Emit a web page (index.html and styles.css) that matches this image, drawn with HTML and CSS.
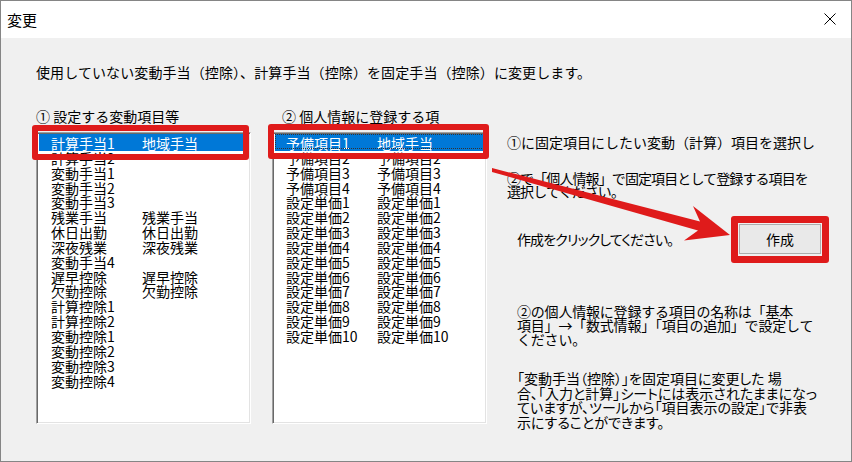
FILE: index.html
```html
<!DOCTYPE html>
<html>
<head lang="ja">
    <meta charset="UTF-8">
    <title>変更</title>
    <link rel="stylesheet" href="styles.css">
</head>
<body>
    <div class="window">
        <div class="titlebar">
            <span class="title">変更</span>
            <svg class="close" width="12" height="12" viewBox="0 0 12 12">
                <path d="M0.5 0.5 L11.5 11.5 M11.5 0.5 L0.5 11.5" stroke="#000" stroke-width="1" fill="none"/>
            </svg>
        </div>

        <div class="client">
            <p class="lead">使用していない変動手当（控除）、計算手当（控除）を固定手当（控除）に変更します。</p>

            <div class="main">
                <div class="pane">
                    <div class="pane-label">① 設定する変動項目等</div>
                    <ul class="listbox">
                        <li class="selected"><span>計算手当1</span><span>地域手当</span></li>
                        <li><span>計算手当2</span><span></span></li>
                        <li><span>変動手当1</span><span></span></li>
                        <li><span>変動手当2</span><span></span></li>
                        <li><span>変動手当3</span><span></span></li>
                        <li><span>残業手当</span><span>残業手当</span></li>
                        <li><span>休日出勤</span><span>休日出勤</span></li>
                        <li><span>深夜残業</span><span>深夜残業</span></li>
                        <li><span>変動手当4</span><span></span></li>
                        <li><span>遅早控除</span><span>遅早控除</span></li>
                        <li><span>欠勤控除</span><span>欠勤控除</span></li>
                        <li><span>計算控除1</span><span></span></li>
                        <li><span>計算控除2</span><span></span></li>
                        <li><span>変動控除1</span><span></span></li>
                        <li><span>変動控除2</span><span></span></li>
                        <li><span>変動控除3</span><span></span></li>
                        <li><span>変動控除4</span><span></span></li>
                    </ul>
                </div>

                <div class="pane pane-second">
                    <div class="pane-label">② 個人情報に登録する項</div>
                    <ul class="listbox">
                        <li class="selected focused"><span>予備項目1</span><span>地域手当</span></li>
                        <li><span>予備項目2</span><span>予備項目2</span></li>
                        <li><span>予備項目3</span><span>予備項目3</span></li>
                        <li><span>予備項目4</span><span>予備項目4</span></li>
                        <li><span>設定単価1</span><span>設定単価1</span></li>
                        <li><span>設定単価2</span><span>設定単価2</span></li>
                        <li><span>設定単価3</span><span>設定単価3</span></li>
                        <li><span>設定単価4</span><span>設定単価4</span></li>
                        <li><span>設定単価5</span><span>設定単価5</span></li>
                        <li><span>設定単価6</span><span>設定単価6</span></li>
                        <li><span>設定単価7</span><span>設定単価7</span></li>
                        <li><span>設定単価8</span><span>設定単価8</span></li>
                        <li><span>設定単価9</span><span>設定単価9</span></li>
                        <li><span>設定単価10</span><span>設定単価10</span></li>
                    </ul>
                </div>

                <div class="guide">
                    <p class="step-one">①に固定項目にしたい変動（計算）項目を選択し</p>
                    <p class="step-two">②で「個人情報」で固定項目として登録する項目を<br>選択してください。</p>
                    <div class="action">
                        <span class="action-text">作成をクリックしてください。</span>
                        <button class="create-btn">作成</button>
                    </div>
                    <p class="note-name">②の個人情報に登録する項目の名称は「基本<br>項目」→「数式情報」「項目の追加」で設定して<br>ください。</p>
                    <p class="note-hide">「変動手当（控除）」を固定項目に変更した 場<br>合、「入力と計算」シートには表示されたままになっ<br>ていますが、ツールから「項目表示の設定」で非表<br>示にすることができます。</p>
                </div>
            </div>
        </div>

        <!-- annotations drawn over the dialog -->
        <div class="mark mark-left"></div>
        <div class="mark mark-mid"></div>
        <div class="mark mark-btn"></div>
        <svg class="arrow" width="852" height="462" viewBox="0 0 852 462">
            <polygon fill="#df1b1b" points="492,168 700,221.5 693,206 730,235 684,240.5 698,230.5 492,172"/>
        </svg>
    </div>
</body>
</html>
```

FILE: styles.css
```css
* {
    box-sizing: border-box;
}
body {
    margin: 0;
    font-family: "Noto Sans CJK JP", "Noto Sans", sans-serif;
    font-size: 14px;
    color: #000;
}
.window {
    position: relative;
    width: 852px;
    height: 462px;
    border: 1px solid #858585;
    background-color: #f0f0f0;
    display: flex;
    flex-direction: column;
}
.titlebar {
    height: 37px;
    background-color: #fff;
    display: flex;
    align-items: center;
    justify-content: space-between;
    padding: 0 15px 0 6px;
    flex-shrink: 0;
}
.title {
    font-size: 15px;
    line-height: 15px;
}
.close {
    display: block;
    margin-top: -1px;
}
.client {
    flex: 1;
    padding: 27px 0 0 35px;
}
.lead {
    margin: 0 0 29px 0;
    line-height: 15px;
    letter-spacing: 0.1px;
}
.main {
    display: flex;
    align-items: flex-start;
}
.pane {
    width: 215px;
    flex-shrink: 0;
}
.pane-second {
    margin-left: 21px;
}
.pane-label {
    line-height: 15px;
    height: 15px;
    margin-bottom: 8px;
}
.pane-second .pane-label {
    margin-left: 10px;
}
.listbox {
    list-style: none;
    margin: 0;
    padding: 1px 2px 0 2px;
    height: 292px;
    background-color: #fff;
    border: 1px solid;
    border-color: #a0a0a0 #fff #fff #a0a0a0;
    box-shadow: inset 1px 1px 0 #696969, inset -1px -1px 0 #e3e3e3;
    overflow: hidden;
}
.listbox li {
    display: grid;
    grid-template-columns: 91px auto;
    height: 14.85px;
    line-height: 15px;
    padding-top: 2px;
    padding-left: 12px;
    white-space: nowrap;
}
.pane-second .listbox li {
    padding-left: 11px;
}
.listbox li.selected {
    background-color: #0078d7;
    color: #fff;
    box-shadow: 0 2px 0 #0078d7;
    position: relative;
}
.listbox li.focused {
    outline: 1px dotted #333;
    outline-offset: -1px;
}
.guide {
    margin-left: 20px;
    padding-top: 26px;
}
.guide p {
    margin: 0;
    white-space: nowrap;
}
.step-one {
    line-height: 15px;
}
.step-two {
    margin-top: 22px !important;
    line-height: 13px;
    letter-spacing: -0.9px;
}
.action {
    display: flex;
    align-items: center;
    margin-top: 26px;
    padding-left: 10px;
    height: 30px;
}
.action-text {
    width: 222px;
    font-feature-settings: "palt";
    letter-spacing: -0.9px;
}
.create-btn {
    width: 82px;
    height: 30px;
    font-family: inherit;
    font-size: 14px;
    background-color: #e9e9e9;
    border: 1px solid #adadad;
    padding: 0;
}
.note-name {
    margin-top: 50px !important;
    padding-left: 10px;
    line-height: 14px;
    letter-spacing: -0.2px;
}
.note-hide {
    margin-top: 25px !important;
    padding-left: 10px;
    line-height: 14.5px;
    font-feature-settings: "palt";
}
.mark {
    position: absolute;
    border: 6px solid #df1b1b;
    border-radius: 3px;
}
.mark-left {
    left: 31px;
    top: 124px;
    width: 217px;
    height: 35px;
}
.mark-mid {
    left: 267px;
    top: 123px;
    width: 221px;
    height: 35px;
}
.mark-btn {
    left: 730px;
    top: 215px;
    width: 98px;
    height: 47px;
    border-width: 7px;
}
.arrow {
    position: absolute;
    left: -1px;
    top: -1px;
    pointer-events: none;
}
```
